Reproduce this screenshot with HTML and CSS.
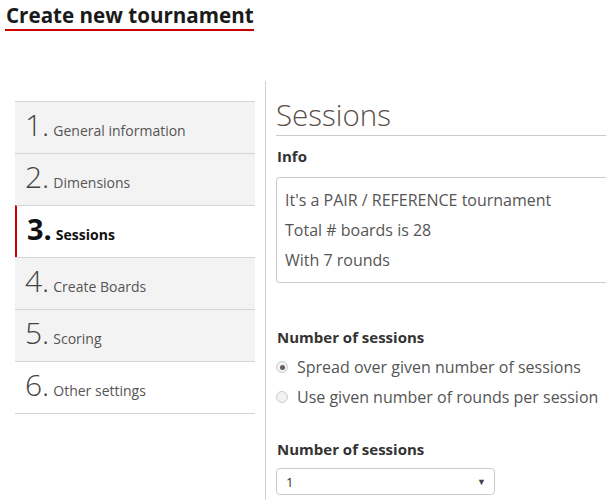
FILE: index.html
```html
<!DOCTYPE html>
<html>
<head>
<meta charset="utf-8">
<link rel="stylesheet" href="styles.css">
</head>
<body>
<div class="page">
  <h1 class="title">Create new tournament</h1>
  <div class="layout">
    <nav class="steps">
      <div class="step"><span class="num">1.</span><span class="label">General information</span></div>
      <div class="step"><span class="num">2.</span><span class="label">Dimensions</span></div>
      <div class="step active"><span class="num">3.</span><span class="label">Sessions</span></div>
      <div class="step"><span class="num">4.</span><span class="label">Create Boards</span></div>
      <div class="step"><span class="num">5.</span><span class="label">Scoring</span></div>
      <div class="step plain"><span class="num">6.</span><span class="label">Other settings</span></div>
    </nav>
    <div class="divider"></div>
    <main class="content">
      <h2 class="heading">Sessions</h2>
      <div class="field-label">Info</div>
      <div class="info-box">
        <p>It's a PAIR / REFERENCE tournament</p>
        <p>Total # boards is 28</p>
        <p>With 7 rounds</p>
      </div>
      <div class="field-label section">Number of sessions</div>
      <label class="radio-row first"><span class="radio checked"></span>Spread over given number of sessions</label>
      <label class="radio-row"><span class="radio"></span>Use given number of rounds per session</label>
      <div class="field-label section2">Number of sessions</div>
      <div class="select"><span>1</span><span class="arrow">▼</span></div>
    </main>
  </div>
</div>
</body>
</html>
```
FILE: styles.css
```css
html, body { margin: 0; padding: 0; background: #fff; }
body { font-family: "Open Sans", "Liberation Sans", sans-serif; color: #555; overflow: hidden; }
.page { width: 606px; height: 500px; overflow: hidden; }
.title {
  margin: 0 0 0 5px;
  padding: 3px 0 2px 1px;
  display: inline-block;
  font-size: 20.6px;
  font-weight: 700;
  line-height: 24px;
  color: #1a1a1a;
  border-bottom: 2px solid #c00;
}
.layout { display: flex; margin-top: 50px; }
.steps { width: 240px; margin-left: 15px; margin-top: 20px; border-bottom: 1px solid #d4d4d4; align-self: flex-start; }
.step {
  border-top: 1px solid #d4d4d4;
  background: #f3f3f3;
  display: flex;
  align-items: baseline;
  padding-left: 10px;
  box-sizing: border-box;
  height: 52px;
  padding-top: 3px;
}
.step.plain { background: #fff; }
.step.active { background: #fff; border-left: 2px solid #c00; padding-left: 10px; }
.num { font-size: 30px; font-weight: 300; color: #444; line-height: 40px; margin-right: 4px; }
.label { font-size: 14px; color: #555; }
.active .num { font-weight: 700; color: #111; font-size: 29px; }
.active .label { font-weight: 700; color: #111; }
.divider { width: 1px; background: #d0d0d0; margin-left: 10px; height: 420px; }
.content { flex: 1; padding-left: 10px; }
.heading {
  margin: 14px 0 0 0;
  font-size: 29.5px;
  font-weight: 300;
  color: #5c4f4b;
  line-height: 40px;
  border-bottom: 1px solid #ccc;
  padding-left: 0;
}
.field-label { font-size: 15px; font-weight: 700; color: #333; margin: 10px 0 0 1px; line-height: 20px; }
.info-box {
  margin-top: 11px;
  border: 1px solid #ccc;
  border-right: none;
  border-radius: 4px 0 0 4px;
  padding: 7px 8px 9px 8px;
  height: 88px;
}
.info-box p { margin: 0; font-size: 16px; line-height: 30px; color: #555; }
.field-label.section { margin-top: 44px; }
.radio-row { display: flex; align-items: center; font-size: 16px; color: #555; line-height: 30px; }
.radio-row.first { margin-top: 5px; }
.radio {
  width: 10px; height: 10px; border-radius: 50%;
  border: 1px solid #ccc; background: #f2f2f2; margin-right: 9px; position: relative;
}
.radio.checked::after {
  content: ""; position: absolute; left: 2.5px; top: 2.5px; width: 5px; height: 5px; border-radius: 50%; background: #6b5c58;
}
.field-label.section2 { margin-top: 27px; }
.select {
  margin-top: 9px;
  width: 200px; height: 25px;
  border: 1px solid #ccc; border-radius: 4px;
  display: flex; align-items: center; justify-content: space-between;
  padding: 0 8px 0 9px;
  font-size: 13px; color: #333;
}
.arrow { font-size: 9px; color: #444; }
```
